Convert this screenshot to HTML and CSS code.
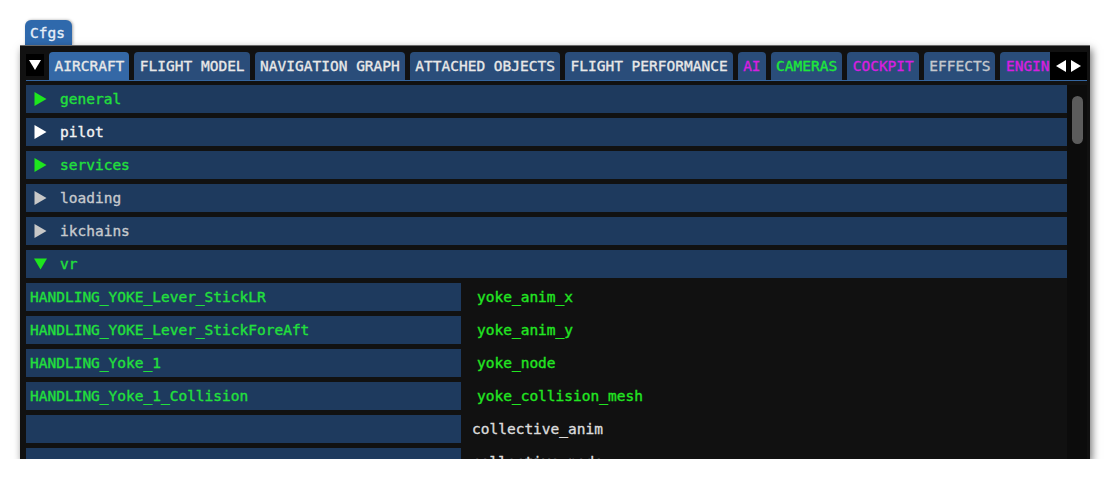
FILE: index.html
```html
<!DOCTYPE html>
<html lang="en">
<head>
    <meta charset="UTF-8">
    <title>Cfgs</title>
    <link rel="stylesheet" href="styles.css">
</head>
<body>
    <div class="stage">
        <div class="title-tab">Cfgs</div>
        <div class="window">
            <div class="tabbar">
                <div class="tab-menu">
                    <svg width="12" height="12" viewBox="0 0 12 12"><path d="M0 1 L12 1 L6 11 Z" fill="#fff"/></svg>
                </div>
                <div class="tabs">
                    <span class="tab active">AIRCRAFT</span>
                    <span class="tab">FLIGHT MODEL</span>
                    <span class="tab">NAVIGATION GRAPH</span>
                    <span class="tab">ATTACHED OBJECTS</span>
                    <span class="tab">FLIGHT PERFORMANCE</span>
                    <span class="tab magenta">AI</span>
                    <span class="tab green">CAMERAS</span>
                    <span class="tab magenta">COCKPIT</span>
                    <span class="tab grey">EFFECTS</span>
                    <span class="tab magenta">ENGINES</span>
                </div>
                <div class="tab-arrows">
                    <svg width="12" height="14" viewBox="0 0 12 14"><path d="M11 1 L11 13 L1 7 Z" fill="#fff"/></svg>
                    <svg width="12" height="14" viewBox="0 0 12 14"><path d="M1 1 L1 13 L11 7 Z" fill="#fff"/></svg>
                </div>
            </div>
            <div class="body">
                <div class="list">
                    <div class="node green"><svg class="arrow" viewBox="0 0 12 14"><path d="M0 0 L12 7 L0 14 Z"/></svg>general</div>
                    <div class="node white"><svg class="arrow" viewBox="0 0 12 14"><path d="M0 0 L12 7 L0 14 Z"/></svg>pilot</div>
                    <div class="node green"><svg class="arrow" viewBox="0 0 12 14"><path d="M0 0 L12 7 L0 14 Z"/></svg>services</div>
                    <div class="node grey"><svg class="arrow" viewBox="0 0 12 14"><path d="M0 0 L12 7 L0 14 Z"/></svg>loading</div>
                    <div class="node grey"><svg class="arrow" viewBox="0 0 12 14"><path d="M0 0 L12 7 L0 14 Z"/></svg>ikchains</div>
                    <div class="node green"><svg class="arrow" viewBox="0 0 14 14"><path d="M0 1 L14 1 L7 13 Z"/></svg>vr</div>

                    <div class="pair">
                        <div class="key">HANDLING_YOKE_Lever_StickLR</div>
                        <div class="val green">yoke_anim_x</div>
                    </div>
                    <div class="pair">
                        <div class="key">HANDLING_YOKE_Lever_StickForeAft</div>
                        <div class="val green">yoke_anim_y</div>
                    </div>
                    <div class="pair">
                        <div class="key">HANDLING_Yoke_1</div>
                        <div class="val green">yoke_node</div>
                    </div>
                    <div class="pair">
                        <div class="key">HANDLING_Yoke_1_Collision</div>
                        <div class="val green">yoke_collision_mesh</div>
                    </div>
                    <div class="pair">
                        <div class="key"></div>
                        <div class="val plain">collective_anim</div>
                    </div>
                    <div class="pair">
                        <div class="key"></div>
                        <div class="val plain">collective_node</div>
                    </div>
                </div>
                <div class="scrollbar">
                    <div class="thumb"></div>
                </div>
            </div>
        </div>
    </div>
</body>
</html>
```

FILE: styles.css
```css
/* Cfgs debug window */
body {
    margin: 0;
    padding: 0;
    background: #fff;
    font-family: "DejaVu Sans Mono", "Liberation Mono", monospace;
    font-size: 14.5px;
    -webkit-text-stroke: 0.35px currentColor; /* a bit heavier, like the original's medium weight */
}
.stage {
    padding: 20px 0 0 20px;
}
.title-tab {
    margin-left: 5px;
    width: 47px;
    height: 25px;
    box-sizing: border-box;
    padding: 5px 0 0 5px;
    background-color: #2f69ac;
    color: #e6eef8;
    border-radius: 6px 6px 0 0;
    box-shadow: 1px 0 3px rgba(0, 0, 0, 0.35);
}
.window {
    width: 1070px;
    height: 414px;
    box-sizing: border-box;
    background-color: #111;
    border-top: 1px solid #6a6a6a;
    box-shadow: 2px 4px 8px rgba(0, 0, 0, 0.55);
    overflow: hidden;
    padding: 6px 3px 0 6px;
}
.tabbar {
    display: flex;
    height: 28px;
    border-bottom: 1px solid #3566a0;
}
.tab-menu {
    width: 18px;
    height: 22px;
    margin-top: 2px;
    background: #000;
    display: flex;
    align-items: center;
    justify-content: center;
}
.tabs {
    display: flex;
    gap: 5px;
    margin-left: 5px;
    width: 1001px;
    overflow: hidden;
    flex: none;
}
.tab {
    flex: none;
    height: 28px;
    line-height: 29px;
    padding: 0 5px 0 5.5px;
    background-color: #2a4d7a;
    color: #e8e8e8;
    border-radius: 4px 4px 0 0;
    white-space: nowrap;
}
.tab.active {
    background-color: #3468a6;
}
.tab.magenta { color: #d81ee0; }
.tab.green { color: #1ee83a; }
.tab.grey { color: #c4c8ce; }
.tab-arrows {
    flex: none;
    width: 37px;
    height: 28px;
    background: #000;
    display: flex;
    align-items: center;
    justify-content: center;
    gap: 3px;
}
.body {
    display: flex;
    margin-top: 4px;
}
.list {
    width: 1041px;
    display: flex;
    flex-direction: column;
    gap: 5px;
}
.node {
    height: 28px;
    display: flex;
    align-items: center;
    background-color: #1e3a5e;
    padding-left: 8px;
}
.arrow {
    width: 13px;
    height: 14px;
    margin-right: 13px;
}
.node.green { color: #22e03c; fill: #1ee61e; }
.node.white { color: #f2f2f2; fill: #fff; }
.node.grey { color: #c6c9cd; fill: #c8c8c8; }
.pair {
    display: flex;
    height: 28px;
    align-items: center;
}
.key {
    width: 431px;
    height: 28px;
    line-height: 28px;
    padding-left: 4px;
    background-color: #1e3a5e;
    color: #22e03c;
}
.val {
    padding-left: 16px;
}
.val.green { color: #22e622; }
.val.plain {
    color: #dcdcdc;
    padding-left: 11px;
}
.scrollbar {
    width: 20px;
    padding-top: 11px;
    display: flex;
    justify-content: center;
    background-color: #0c0c0c;
    height: 400px;
}
.thumb {
    width: 11px;
    height: 48px;
    background-color: #5c5c5c;
    border-radius: 6px;
}
```
